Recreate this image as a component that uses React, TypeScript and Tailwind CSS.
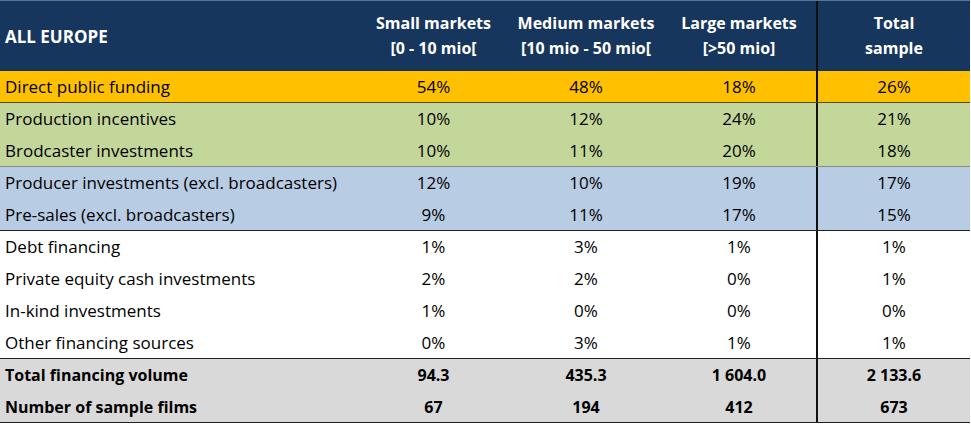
const groups = [
  {
    bg: "bg-[#ffc000]",
    border: "border-[#5a4a10]",
    rows: [["Direct public funding", "54%", "48%", "18%", "26%"]],
  },
  {
    bg: "bg-[#c4d79b]",
    border: "border-[#8a8a8a]",
    rows: [
      ["Production incentives", "10%", "12%", "24%", "21%"],
      ["Brodcaster investments", "10%", "11%", "20%", "18%"],
    ],
  },
  {
    bg: "bg-[#b8cce4]",
    border: "border-[#222]",
    rows: [
      ["Producer investments (excl. broadcasters)", "12%", "10%", "19%", "17%"],
      ["Pre-sales (excl. broadcasters)", "9%", "11%", "17%", "15%"],
    ],
  },
  {
    bg: "bg-white",
    border: "border-[#222]",
    rows: [
      ["Debt financing", "1%", "3%", "1%", "1%"],
      ["Private equity cash investments", "2%", "2%", "0%", "1%"],
      ["In-kind investments", "1%", "0%", "0%", "0%"],
      ["Other financing sources", "0%", "3%", "1%", "1%"],
    ],
  },
  {
    bg: "bg-[#d9d9d9]",
    border: "border-[#222]",
    bold: true,
    rows: [
      ["Total financing volume", "94.3", "435.3", "1 604.0", "2 133.6"],
      ["Number of sample films", "67", "194", "412", "673"],
    ],
  },
];

const cols = "grid grid-cols-[357px_153px_152px_154px_154px]";

export default function App() {
  return (
    <div className="w-[971px] h-[425px] bg-white font-['Open_Sans',sans-serif] text-[17px] text-black">
      <div className="w-[970px]">
        <div className={`${cols} h-[71px] bg-[#17365d] border-t border-[#5c7290] text-white font-bold text-[16px] leading-[25px]`}>
          <div className="flex items-center pl-[5px] text-[17px]">ALL EUROPE</div>
          <div className="flex items-center justify-center text-center">Small markets<br />[0 - 10 mio[</div>
          <div className="flex items-center justify-center text-center">Medium markets<br />[10 mio - 50 mio[</div>
          <div className="flex items-center justify-center text-center">Large markets<br />[&gt;50 mio]</div>
          <div className="flex items-center justify-center text-center border-l-2 border-[#111]">Total<br />sample</div>
        </div>
        {groups.map((g, gi) => (
          <div key={gi} className={`${g.bg} ${g.bold ? "font-bold text-[16px]" : ""}`}>
            {g.rows.map((r, ri) => (
              <div
                key={ri}
                className={`${cols} h-[32px] ${ri === g.rows.length - 1 ? `border-b ${g.border}` : ""}`}
              >
                <div className="flex items-center pl-[5px] whitespace-nowrap">{r[0]}</div>
                <div className="flex items-center justify-center">{r[1]}</div>
                <div className="flex items-center justify-center">{r[2]}</div>
                <div className="flex items-center justify-center">{r[3]}</div>
                <div className="flex items-center justify-center border-l-2 border-[#111]">{r[4]}</div>
              </div>
            ))}
          </div>
        ))}
      </div>
    </div>
  );
}
